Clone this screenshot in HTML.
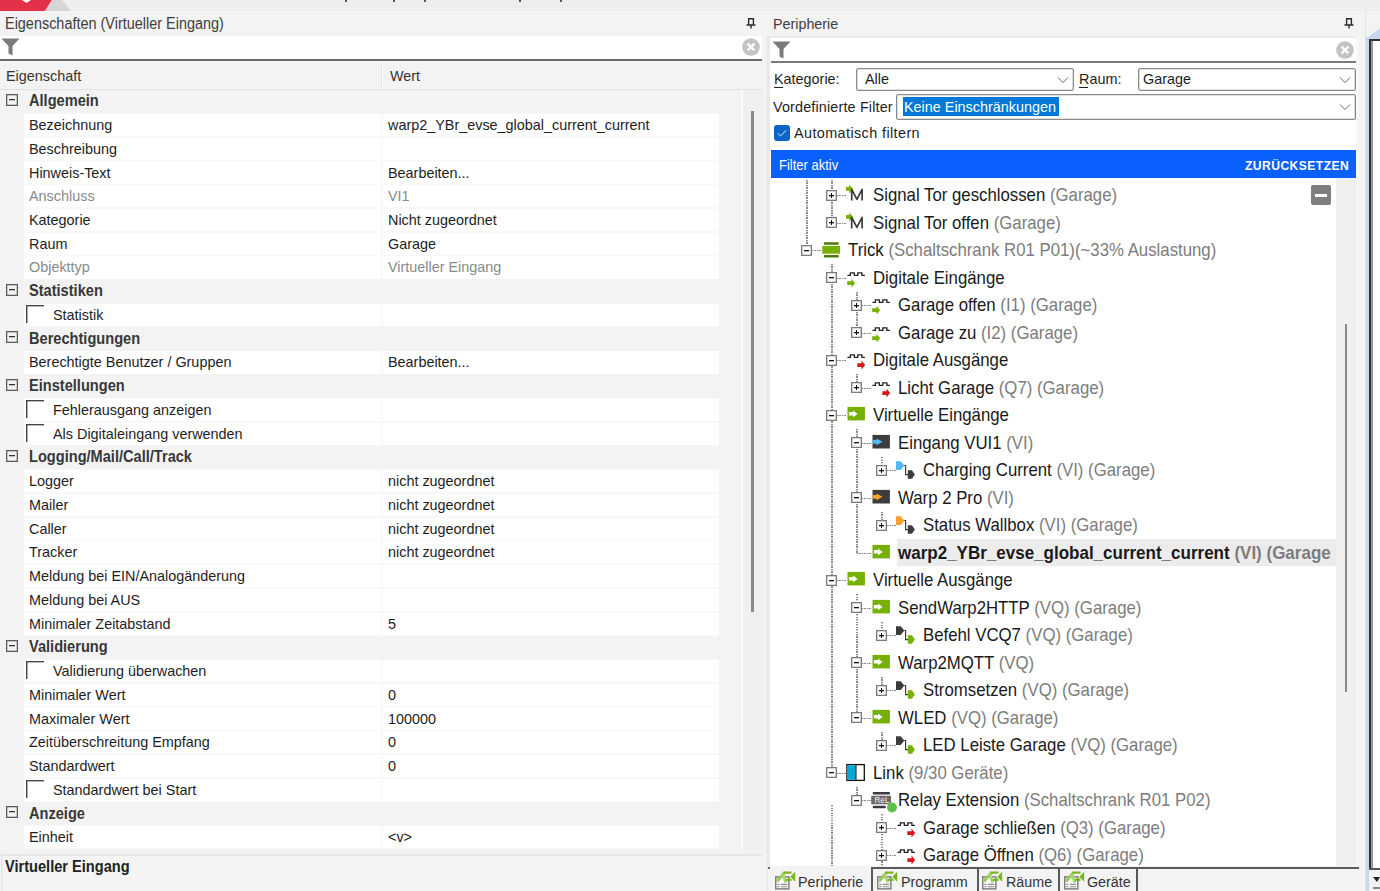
<!DOCTYPE html><html><head><meta charset="utf-8"><style>
*{margin:0;padding:0;box-sizing:border-box}
html,body{width:1380px;height:891px;overflow:hidden;background:#f3f3f3;font-family:"Liberation Sans",sans-serif;color:#1e1e1e}
.a{position:absolute}
.t{position:absolute;white-space:pre;font-size:14.4px;line-height:20px;transform:scaleY(1.08);transform-origin:0 15px}
.t.b{font-size:14.6px}
.g{color:#8a8a8a}
.b{font-weight:bold}
.row{position:absolute;height:23px}
.cb{position:absolute;width:18px;height:18px;border-left:1px solid #444;border-top:1px solid #444;box-shadow:inset 0.6px 0.6px 0 #777}
.ex{position:absolute;width:11px;height:11px;border:1px solid #7c7c7c;box-shadow:inset 0 0 0 0.6px #b0b0b0;background:#fff}
.ex:before{content:"";position:absolute;left:2px;top:4px;width:5px;height:1px;background:#111;box-shadow:0 0.4px 0 #444}
.ex.p:after{content:"";position:absolute;left:4px;top:2px;width:1px;height:5px;background:#111}
.vl{position:absolute;width:1.4px;background:repeating-linear-gradient(to bottom,#8c8c8c 0 1.3px,#d8d8d8 1.3px 1.7px,transparent 1.7px 2.5px)}
.hl{position:absolute;height:1.4px;background:repeating-linear-gradient(to right,#8c8c8c 0 1.3px,#d8d8d8 1.3px 1.7px,transparent 1.7px 2.5px)}
.tt{position:absolute;white-space:pre;font-size:16.8px;line-height:22px;color:#1a1a1a;transform:scaleY(1.08);transform-origin:0 17px}
.tt.b{font-size:17px}
.tt .g{color:#7d7d7d}
</style></head><body>
<div class="a" style="left:0;top:0;width:1380px;height:11px;background:#eeeeee"></div>
<svg class="a" style="left:0;top:0" width="80" height="11"><polygon points="0,0 52,0 45,11 0,11" fill="#e5304a"/><polygon points="52,0 62,0 71,11 45,11" fill="#d6d6d6"/><polygon points="22,0 31,0 26.5,3" fill="#fff"/></svg>
<div class="a" style="left:345px;top:0;width:2px;height:2px;background:#555"></div>
<div class="a" style="left:393px;top:0;width:2px;height:2px;background:#555"></div>
<div class="a" style="left:424px;top:0;width:2px;height:2px;background:#555"></div>
<div class="a" style="left:519px;top:0;width:2px;height:2px;background:#555"></div>
<div class="a" style="left:560px;top:0;width:2px;height:2px;background:#555"></div>
<div class="t" style="left:5px;top:14px;font-size:14.45px;color:#3e3e3e">Eigenschaften (Virtueller Eingang)</div>
<svg class="a" style="left:746px;top:18px" width="10" height="11" viewBox="0 0 10 11"><path d="M2,0.8H8M2.6,0.8V6.5M7.4,0.8V6.5M0.5,7H9.5M5,7V10.5" stroke="#2a2a2a" stroke-width="1.4" fill="none"/></svg>
<div class="a" style="left:0;top:36px;width:762px;height:25px;background:#fff;border-bottom:2px solid #6b6b6b"></div>
<svg class="a" style="left:1px;top:38px" width="19" height="18" viewBox="0 0 19 18"><path d="M0.5,0.5H18.5L11.5,8V17.5L7.5,15.5V8Z" fill="#7a7a7a"/></svg>
<svg class="a" style="left:742px;top:38px" width="18" height="18" viewBox="0 0 18 18"><circle cx="9" cy="9" r="8.8" fill="#c3c3c3"/><path d="M5.6,5.6L12.4,12.4M12.4,5.6L5.6,12.4" stroke="#fff" stroke-width="2.2"/></svg>
<div class="a" style="left:0;top:61px;width:763px;height:29px;background:#f3f3f3;border-bottom:1px solid #e3e3e3"></div>
<div class="a" style="left:381px;top:62px;width:1px;height:27px;background:#e6e6e6"></div>
<div class="a" style="left:382px;top:62px;width:1px;height:27px;background:#fff"></div>
<div class="t" style="left:6px;top:66px;color:#333">Eigenschaft</div>
<div class="t" style="left:390px;top:66px;color:#333">Wert</div>
<div class="a" style="left:6px;top:94px;width:12px;height:12px;border:1px solid #5a5a5a;box-shadow:inset 0 0 0 0.5px #9a9a9a"></div>
<div class="a" style="left:9px;top:99px;width:6px;height:1px;background:#333;box-shadow:0 0.5px 0 #888"></div>
<div class="t b" style="left:29px;top:91.30px;color:#383838">Allgemein</div>
<div class="a" style="left:24px;top:113.24px;width:695px;height:23.74px;background:#f8f8f8"></div>
<div class="a" style="left:24px;top:113.99px;width:357px;height:22.2px;background:#fff"></div>
<div class="a" style="left:383px;top:113.99px;width:336px;height:22.2px;background:#fff"></div>
<div class="t" style="left:29px;top:115.04px">Bezeichnung</div>
<div class="t" style="left:388px;top:115.04px">warp2_YBr_evse_global_current_current</div>
<div class="a" style="left:24px;top:136.98px;width:695px;height:23.74px;background:#f8f8f8"></div>
<div class="a" style="left:24px;top:137.73px;width:357px;height:22.2px;background:#fff"></div>
<div class="a" style="left:383px;top:137.73px;width:336px;height:22.2px;background:#fff"></div>
<div class="t" style="left:29px;top:138.78px">Beschreibung</div>
<div class="a" style="left:24px;top:160.72px;width:695px;height:23.74px;background:#f8f8f8"></div>
<div class="a" style="left:24px;top:161.47px;width:357px;height:22.2px;background:#fff"></div>
<div class="a" style="left:383px;top:161.47px;width:336px;height:22.2px;background:#fff"></div>
<div class="t" style="left:29px;top:162.52px">Hinweis-Text</div>
<div class="t" style="left:388px;top:162.52px">Bearbeiten...</div>
<div class="a" style="left:24px;top:184.46px;width:695px;height:23.74px;background:#f8f8f8"></div>
<div class="a" style="left:24px;top:185.21px;width:357px;height:22.2px;background:#fff"></div>
<div class="a" style="left:383px;top:185.21px;width:336px;height:22.2px;background:#fff"></div>
<div class="t g" style="left:29px;top:186.26px">Anschluss</div>
<div class="t g" style="left:388px;top:186.26px">VI1</div>
<div class="a" style="left:24px;top:208.20px;width:695px;height:23.74px;background:#f8f8f8"></div>
<div class="a" style="left:24px;top:208.95px;width:357px;height:22.2px;background:#fff"></div>
<div class="a" style="left:383px;top:208.95px;width:336px;height:22.2px;background:#fff"></div>
<div class="t" style="left:29px;top:210.00px">Kategorie</div>
<div class="t" style="left:388px;top:210.00px">Nicht zugeordnet</div>
<div class="a" style="left:24px;top:231.94px;width:695px;height:23.74px;background:#f8f8f8"></div>
<div class="a" style="left:24px;top:232.69px;width:357px;height:22.2px;background:#fff"></div>
<div class="a" style="left:383px;top:232.69px;width:336px;height:22.2px;background:#fff"></div>
<div class="t" style="left:29px;top:233.74px">Raum</div>
<div class="t" style="left:388px;top:233.74px">Garage</div>
<div class="a" style="left:24px;top:255.68px;width:695px;height:23.74px;background:#f8f8f8"></div>
<div class="a" style="left:24px;top:256.43px;width:357px;height:22.2px;background:#fff"></div>
<div class="a" style="left:383px;top:256.43px;width:336px;height:22.2px;background:#fff"></div>
<div class="t g" style="left:29px;top:257.48px">Objekttyp</div>
<div class="t g" style="left:388px;top:257.48px">Virtueller Eingang</div>
<div class="a" style="left:6px;top:284px;width:12px;height:12px;border:1px solid #5a5a5a;box-shadow:inset 0 0 0 0.5px #9a9a9a"></div>
<div class="a" style="left:9px;top:289px;width:6px;height:1px;background:#333;box-shadow:0 0.5px 0 #888"></div>
<div class="t b" style="left:29px;top:281.22px;color:#383838">Statistiken</div>
<div class="a" style="left:24px;top:303.16px;width:695px;height:23.74px;background:#f8f8f8"></div>
<div class="a" style="left:24px;top:303.91px;width:357px;height:22.2px;background:#fff"></div>
<div class="a" style="left:383px;top:303.91px;width:336px;height:22.2px;background:#fff"></div>
<div class="cb" style="left:26px;top:305.16px"></div>
<div class="t" style="left:53px;top:304.96px">Statistik</div>
<div class="a" style="left:6px;top:331px;width:12px;height:12px;border:1px solid #5a5a5a;box-shadow:inset 0 0 0 0.5px #9a9a9a"></div>
<div class="a" style="left:9px;top:336px;width:6px;height:1px;background:#333;box-shadow:0 0.5px 0 #888"></div>
<div class="t b" style="left:29px;top:328.70px;color:#383838">Berechtigungen</div>
<div class="a" style="left:24px;top:350.64px;width:695px;height:23.74px;background:#f8f8f8"></div>
<div class="a" style="left:24px;top:351.39px;width:357px;height:22.2px;background:#fff"></div>
<div class="a" style="left:383px;top:351.39px;width:336px;height:22.2px;background:#fff"></div>
<div class="t" style="left:29px;top:352.44px">Berechtigte Benutzer / Gruppen</div>
<div class="t" style="left:388px;top:352.44px">Bearbeiten...</div>
<div class="a" style="left:6px;top:379px;width:12px;height:12px;border:1px solid #5a5a5a;box-shadow:inset 0 0 0 0.5px #9a9a9a"></div>
<div class="a" style="left:9px;top:384px;width:6px;height:1px;background:#333;box-shadow:0 0.5px 0 #888"></div>
<div class="t b" style="left:29px;top:376.18px;color:#383838">Einstellungen</div>
<div class="a" style="left:24px;top:398.12px;width:695px;height:23.74px;background:#f8f8f8"></div>
<div class="a" style="left:24px;top:398.87px;width:357px;height:22.2px;background:#fff"></div>
<div class="a" style="left:383px;top:398.87px;width:336px;height:22.2px;background:#fff"></div>
<div class="cb" style="left:26px;top:400.12px"></div>
<div class="t" style="left:53px;top:399.92px">Fehlerausgang anzeigen</div>
<div class="a" style="left:24px;top:421.86px;width:695px;height:23.74px;background:#f8f8f8"></div>
<div class="a" style="left:24px;top:422.61px;width:357px;height:22.2px;background:#fff"></div>
<div class="a" style="left:383px;top:422.61px;width:336px;height:22.2px;background:#fff"></div>
<div class="cb" style="left:26px;top:423.86px"></div>
<div class="t" style="left:53px;top:423.66px">Als Digitaleingang verwenden</div>
<div class="a" style="left:6px;top:450px;width:12px;height:12px;border:1px solid #5a5a5a;box-shadow:inset 0 0 0 0.5px #9a9a9a"></div>
<div class="a" style="left:9px;top:455px;width:6px;height:1px;background:#333;box-shadow:0 0.5px 0 #888"></div>
<div class="t b" style="left:29px;top:447.40px;color:#383838">Logging/Mail/Call/Track</div>
<div class="a" style="left:24px;top:469.34px;width:695px;height:23.74px;background:#f8f8f8"></div>
<div class="a" style="left:24px;top:470.09px;width:357px;height:22.2px;background:#fff"></div>
<div class="a" style="left:383px;top:470.09px;width:336px;height:22.2px;background:#fff"></div>
<div class="t" style="left:29px;top:471.14px">Logger</div>
<div class="t" style="left:388px;top:471.14px">nicht zugeordnet</div>
<div class="a" style="left:24px;top:493.08px;width:695px;height:23.74px;background:#f8f8f8"></div>
<div class="a" style="left:24px;top:493.83px;width:357px;height:22.2px;background:#fff"></div>
<div class="a" style="left:383px;top:493.83px;width:336px;height:22.2px;background:#fff"></div>
<div class="t" style="left:29px;top:494.88px">Mailer</div>
<div class="t" style="left:388px;top:494.88px">nicht zugeordnet</div>
<div class="a" style="left:24px;top:516.82px;width:695px;height:23.74px;background:#f8f8f8"></div>
<div class="a" style="left:24px;top:517.57px;width:357px;height:22.2px;background:#fff"></div>
<div class="a" style="left:383px;top:517.57px;width:336px;height:22.2px;background:#fff"></div>
<div class="t" style="left:29px;top:518.62px">Caller</div>
<div class="t" style="left:388px;top:518.62px">nicht zugeordnet</div>
<div class="a" style="left:24px;top:540.56px;width:695px;height:23.74px;background:#f8f8f8"></div>
<div class="a" style="left:24px;top:541.31px;width:357px;height:22.2px;background:#fff"></div>
<div class="a" style="left:383px;top:541.31px;width:336px;height:22.2px;background:#fff"></div>
<div class="t" style="left:29px;top:542.36px">Tracker</div>
<div class="t" style="left:388px;top:542.36px">nicht zugeordnet</div>
<div class="a" style="left:24px;top:564.30px;width:695px;height:23.74px;background:#f8f8f8"></div>
<div class="a" style="left:24px;top:565.05px;width:357px;height:22.2px;background:#fff"></div>
<div class="a" style="left:383px;top:565.05px;width:336px;height:22.2px;background:#fff"></div>
<div class="t" style="left:29px;top:566.10px">Meldung bei EIN/Analogänderung</div>
<div class="a" style="left:24px;top:588.04px;width:695px;height:23.74px;background:#f8f8f8"></div>
<div class="a" style="left:24px;top:588.79px;width:357px;height:22.2px;background:#fff"></div>
<div class="a" style="left:383px;top:588.79px;width:336px;height:22.2px;background:#fff"></div>
<div class="t" style="left:29px;top:589.84px">Meldung bei AUS</div>
<div class="a" style="left:24px;top:611.78px;width:695px;height:23.74px;background:#f8f8f8"></div>
<div class="a" style="left:24px;top:612.53px;width:357px;height:22.2px;background:#fff"></div>
<div class="a" style="left:383px;top:612.53px;width:336px;height:22.2px;background:#fff"></div>
<div class="t" style="left:29px;top:613.58px">Minimaler Zeitabstand</div>
<div class="t" style="left:388px;top:613.58px">5</div>
<div class="a" style="left:6px;top:640px;width:12px;height:12px;border:1px solid #5a5a5a;box-shadow:inset 0 0 0 0.5px #9a9a9a"></div>
<div class="a" style="left:9px;top:645px;width:6px;height:1px;background:#333;box-shadow:0 0.5px 0 #888"></div>
<div class="t b" style="left:29px;top:637.32px;color:#383838">Validierung</div>
<div class="a" style="left:24px;top:659.26px;width:695px;height:23.74px;background:#f8f8f8"></div>
<div class="a" style="left:24px;top:660.01px;width:357px;height:22.2px;background:#fff"></div>
<div class="a" style="left:383px;top:660.01px;width:336px;height:22.2px;background:#fff"></div>
<div class="cb" style="left:26px;top:661.26px"></div>
<div class="t" style="left:53px;top:661.06px">Validierung überwachen</div>
<div class="a" style="left:24px;top:683.00px;width:695px;height:23.74px;background:#f8f8f8"></div>
<div class="a" style="left:24px;top:683.75px;width:357px;height:22.2px;background:#fff"></div>
<div class="a" style="left:383px;top:683.75px;width:336px;height:22.2px;background:#fff"></div>
<div class="t" style="left:29px;top:684.80px">Minimaler Wert</div>
<div class="t" style="left:388px;top:684.80px">0</div>
<div class="a" style="left:24px;top:706.74px;width:695px;height:23.74px;background:#f8f8f8"></div>
<div class="a" style="left:24px;top:707.49px;width:357px;height:22.2px;background:#fff"></div>
<div class="a" style="left:383px;top:707.49px;width:336px;height:22.2px;background:#fff"></div>
<div class="t" style="left:29px;top:708.54px">Maximaler Wert</div>
<div class="t" style="left:388px;top:708.54px">100000</div>
<div class="a" style="left:24px;top:730.48px;width:695px;height:23.74px;background:#f8f8f8"></div>
<div class="a" style="left:24px;top:731.23px;width:357px;height:22.2px;background:#fff"></div>
<div class="a" style="left:383px;top:731.23px;width:336px;height:22.2px;background:#fff"></div>
<div class="t" style="left:29px;top:732.28px">Zeitüberschreitung Empfang</div>
<div class="t" style="left:388px;top:732.28px">0</div>
<div class="a" style="left:24px;top:754.22px;width:695px;height:23.74px;background:#f8f8f8"></div>
<div class="a" style="left:24px;top:754.97px;width:357px;height:22.2px;background:#fff"></div>
<div class="a" style="left:383px;top:754.97px;width:336px;height:22.2px;background:#fff"></div>
<div class="t" style="left:29px;top:756.02px">Standardwert</div>
<div class="t" style="left:388px;top:756.02px">0</div>
<div class="a" style="left:24px;top:777.96px;width:695px;height:23.74px;background:#f8f8f8"></div>
<div class="a" style="left:24px;top:778.71px;width:357px;height:22.2px;background:#fff"></div>
<div class="a" style="left:383px;top:778.71px;width:336px;height:22.2px;background:#fff"></div>
<div class="cb" style="left:26px;top:779.96px"></div>
<div class="t" style="left:53px;top:779.76px">Standardwert bei Start</div>
<div class="a" style="left:6px;top:806px;width:12px;height:12px;border:1px solid #5a5a5a;box-shadow:inset 0 0 0 0.5px #9a9a9a"></div>
<div class="a" style="left:9px;top:811px;width:6px;height:1px;background:#333;box-shadow:0 0.5px 0 #888"></div>
<div class="t b" style="left:29px;top:803.50px;color:#383838">Anzeige</div>
<div class="a" style="left:24px;top:825.44px;width:695px;height:23.74px;background:#f8f8f8"></div>
<div class="a" style="left:24px;top:826.19px;width:357px;height:22.2px;background:#fff"></div>
<div class="a" style="left:383px;top:826.19px;width:336px;height:22.2px;background:#fff"></div>
<div class="t" style="left:29px;top:827.24px">Einheit</div>
<div class="t" style="left:388px;top:827.24px">&lt;v&gt;</div>
<div class="a" style="left:741px;top:90px;width:2px;height:760px;background:#fafafa"></div>
<div class="a" style="left:743px;top:90px;width:19px;height:760px;background:#efefef"></div>
<div class="a" style="left:751px;top:111px;width:3px;height:501px;background:#8a8a8a"></div>
<div class="a" style="left:0;top:849px;width:763px;height:42px;background:#f3f3f3"></div>
<div class="a" style="left:1px;top:854px;width:761px;height:37px;background:#f4f4f4;border-top:2px solid #e6e6e6;border-left:2px solid #e9e9e9"></div>
<div class="t b" style="left:5px;top:857px;color:#222">Virtueller Eingang</div>
<div class="a" style="left:763px;top:11px;width:5px;height:880px;background:#f3f3f3"></div>
<div class="a" style="left:767px;top:36px;width:1px;height:855px;background:#e6e6e6"></div>
<div class="t" style="left:773px;top:14px;font-size:14.3px;color:#3e3e3e">Peripherie</div>
<svg class="a" style="left:1344px;top:18px" width="10" height="11" viewBox="0 0 10 11"><path d="M2,0.8H8M2.6,0.8V6.5M7.4,0.8V6.5M0.5,7H9.5M5,7V10.5" stroke="#2a2a2a" stroke-width="1.4" fill="none"/></svg>
<div class="a" style="left:768px;top:36px;width:588px;height:142px;background:#fff;border-left:2px solid #e8e8e8;border-top:2px solid #ececec"></div>
<div class="a" style="left:771px;top:61px;width:585px;height:2px;background:#7a7a7a"></div>
<svg class="a" style="left:772px;top:41px" width="19" height="18" viewBox="0 0 19 18"><path d="M0.5,0.5H18.5L11.5,8V17.5L7.5,15.5V8Z" fill="#7a7a7a"/></svg>
<svg class="a" style="left:1336px;top:41px" width="18" height="18" viewBox="0 0 18 18"><circle cx="9" cy="9" r="8.8" fill="#c3c3c3"/><path d="M5.6,5.6L12.4,12.4M12.4,5.6L5.6,12.4" stroke="#fff" stroke-width="2.2"/></svg>
<div class="t" style="left:774px;top:69px">Kategorie:</div>
<div class="a" style="left:774px;top:87px;width:9px;height:1px;background:#222"></div>
<div class="a" style="left:856px;top:68px;width:218px;height:23px;background:#fff;border:1px solid #8a8a8a;border-radius:2px;box-shadow:inset 0 0 0 0.6px #c4c4c4"></div><svg class="a" style="left:1057px;top:75.5px" width="12" height="8" viewBox="0 0 12 8"><path d="M1,1.5L6,6.5L11,1.5" stroke="#666" stroke-width="1" fill="none"/></svg>
<div class="t" style="left:865px;top:69px">Alle</div>
<div class="t" style="left:1079px;top:69px">Raum:</div>
<div class="a" style="left:1079px;top:87px;width:9px;height:1px;background:#222"></div>
<div class="a" style="left:1138px;top:68px;width:218px;height:23px;background:#fff;border:1px solid #8a8a8a;border-radius:2px;box-shadow:inset 0 0 0 0.6px #c4c4c4"></div><svg class="a" style="left:1339px;top:75.5px" width="12" height="8" viewBox="0 0 12 8"><path d="M1,1.5L6,6.5L11,1.5" stroke="#666" stroke-width="1" fill="none"/></svg>
<div class="t" style="left:1143px;top:69px">Garage</div>
<div class="t" style="left:773px;top:97px;letter-spacing:0.15px">Vordefinierte Filter</div>
<div class="a" style="left:896px;top:94px;width:460px;height:26px;background:#fff;border:1px solid #8a8a8a;border-radius:2px;box-shadow:inset 0 0 0 0.6px #c4c4c4"></div><svg class="a" style="left:1339px;top:103.0px" width="12" height="8" viewBox="0 0 12 8"><path d="M1,1.5L6,6.5L11,1.5" stroke="#666" stroke-width="1" fill="none"/></svg>
<div class="a" style="left:903px;top:97px;width:156px;height:19px;background:#0078d7"></div>
<div class="t" style="left:904px;top:97px;color:#fff">Keine Einschränkungen</div>
<div class="a" style="left:774px;top:125px;width:16px;height:16px;background:#0a64c8;border-radius:3px"></div>
<svg class="a" style="left:774px;top:125px" width="16" height="16" viewBox="0 0 16 16"><path d="M3.8,8.4L6.6,11L12.2,5.2" stroke="#dfe9f7" stroke-width="1" fill="none"/></svg>
<div class="t" style="left:794px;top:123px;letter-spacing:0.4px">Automatisch filtern</div>
<div class="a" style="left:771px;top:150px;width:585px;height:29px;background:#0960fd"></div>
<div class="t" style="left:779px;top:156px;font-size:13px;color:#fff">Filter aktiv</div>
<div class="t b" style="left:1245px;top:156px;font-size:12.1px;color:#fff;letter-spacing:0.45px">ZURÜCKSETZEN</div>
<div class="a" style="left:770px;top:178px;width:566px;height:688px;background:#fff"></div>
<div class="a" style="left:768px;top:36px;width:2px;height:830px;background:#e9e9e9"></div>
<div class="a" style="left:1336px;top:178px;width:20px;height:688px;background:#f0f0f0"></div>
<div class="a" style="left:1345px;top:324px;width:2px;height:368px;background:#8a8a8a"></div>
<div class="a" style="left:1311px;top:185px;width:20px;height:20px;background:#7f7f7f;border-radius:2px"></div>
<div class="a" style="left:1315px;top:193.5px;width:12px;height:3px;background:#fff"></div>
<div class="vl" style="left:806.2px;top:180.0px;height:70.3px"></div>
<div class="vl" style="left:831.2px;top:180.0px;height:42.8px"></div>
<div class="vl" style="left:831.2px;top:264.1px;height:508.7px"></div>
<div class="vl" style="left:831.2px;top:805.0px;height:61.0px"></div>
<div class="vl" style="left:856.2px;top:291.6px;height:41.2px"></div>
<div class="vl" style="left:856.2px;top:374.1px;height:13.8px"></div>
<div class="vl" style="left:856.2px;top:429.1px;height:123.7px"></div>
<div class="vl" style="left:856.2px;top:594.0px;height:123.8px"></div>
<div class="vl" style="left:856.2px;top:786.5px;height:13.8px"></div>
<div class="vl" style="left:881.2px;top:456.6px;height:13.8px"></div>
<div class="vl" style="left:881.2px;top:511.5px;height:13.8px"></div>
<div class="vl" style="left:881.2px;top:621.5px;height:13.8px"></div>
<div class="vl" style="left:881.2px;top:676.5px;height:13.8px"></div>
<div class="vl" style="left:881.2px;top:731.5px;height:13.8px"></div>
<div class="vl" style="left:881.2px;top:814.0px;height:52.0px"></div>
<div class="hl" style="left:832px;top:194.8px;width:14px"></div>
<div class="ex p" style="left:826px;top:190px"></div>
<svg class="a" style="left:847px;top:185.3px;overflow:visible" width="20" height="20"><path d="M-1,2H2.3V-0.4L6.1,4.1L2.3,8.5V5.8H-1Z" fill="#76b000"/><path d="M4.7,15.4V4.4L9.9,14.4L15.1,4.4V15.4" stroke="#3c3c3c" stroke-width="1.7" fill="none" stroke-linejoin="round"/></svg>
<div class="tt" style="left:873px;top:185.3px">Signal Tor geschlossen<span class="g"> (Garage)</span></div>
<div class="hl" style="left:832px;top:222.8px;width:14px"></div>
<div class="ex p" style="left:826px;top:217px"></div>
<svg class="a" style="left:847px;top:212.8px;overflow:visible" width="20" height="20"><path d="M-1,2H2.3V-0.4L6.1,4.1L2.3,8.5V5.8H-1Z" fill="#76b000"/><path d="M4.7,15.4V4.4L9.9,14.4L15.1,4.4V15.4" stroke="#3c3c3c" stroke-width="1.7" fill="none" stroke-linejoin="round"/></svg>
<div class="tt" style="left:873px;top:212.8px">Signal Tor offen<span class="g"> (Garage)</span></div>
<div class="hl" style="left:807px;top:249.8px;width:14px"></div>
<div class="ex" style="left:801px;top:245px"></div>
<svg class="a" style="left:822px;top:240.3px;overflow:visible" width="20" height="20"><rect x="1.8" y="2.2" width="15" height="2.6" rx="1" fill="#4d7a00"/><rect x="0.3" y="5.9" width="17.7" height="7.8" fill="#76b000"/><rect x="1.8" y="14.9" width="15" height="2.6" rx="1" fill="#4d7a00"/></svg>
<div class="tt" style="left:848px;top:240.3px">Trick<span class="g"> (Schaltschrank R01 P01)(~33% Auslastung)</span></div>
<div class="hl" style="left:832px;top:277.8px;width:14px"></div>
<div class="ex" style="left:826px;top:272px"></div>
<svg class="a" style="left:847px;top:267.8px;overflow:visible" width="20" height="20"><path d="M0.4,7.4H3.4V4.9H7.3V7.4H10.8V4.9H14.9V7.4H17.9" stroke="#222" stroke-width="1.3" fill="none"/><path d="M0.2,13.2H4.5V10.8L8.1,15.2L4.5,19.6V16.9H0.2Z" fill="#76b000"/></svg>
<div class="tt" style="left:873px;top:267.8px">Digitale Eingänge<span class="g"></span></div>
<div class="hl" style="left:857px;top:304.8px;width:14px"></div>
<div class="ex p" style="left:851px;top:300px"></div>
<svg class="a" style="left:872px;top:295.3px;overflow:visible" width="20" height="20"><path d="M0.4,7.4H3.4V4.9H7.3V7.4H10.8V4.9H14.9V7.4H17.9" stroke="#222" stroke-width="1.3" fill="none"/><path d="M0.2,13.2H4.5V10.8L8.1,15.2L4.5,19.6V16.9H0.2Z" fill="#76b000"/></svg>
<div class="tt" style="left:898px;top:295.3px">Garage offen<span class="g"> (I1) (Garage)</span></div>
<div class="hl" style="left:857px;top:332.8px;width:14px"></div>
<div class="ex p" style="left:851px;top:327px"></div>
<svg class="a" style="left:872px;top:322.8px;overflow:visible" width="20" height="20"><path d="M0.4,7.4H3.4V4.9H7.3V7.4H10.8V4.9H14.9V7.4H17.9" stroke="#222" stroke-width="1.3" fill="none"/><path d="M0.2,13.2H4.5V10.8L8.1,15.2L4.5,19.6V16.9H0.2Z" fill="#76b000"/></svg>
<div class="tt" style="left:898px;top:322.8px">Garage zu<span class="g"> (I2) (Garage)</span></div>
<div class="hl" style="left:832px;top:359.8px;width:14px"></div>
<div class="ex" style="left:826px;top:355px"></div>
<svg class="a" style="left:847px;top:350.3px;overflow:visible" width="20" height="20"><path d="M0.4,7.4H3.4V4.9H7.3V7.4H10.8V4.9H14.9V7.4H17.9" stroke="#222" stroke-width="1.3" fill="none"/><path d="M10.3,13.2H14.5V10.6L18.2,15.1L14.5,19.6V17H10.3Z" fill="#d8191b"/></svg>
<div class="tt" style="left:873px;top:350.3px">Digitale Ausgänge<span class="g"></span></div>
<div class="hl" style="left:857px;top:387.8px;width:14px"></div>
<div class="ex p" style="left:851px;top:382px"></div>
<svg class="a" style="left:872px;top:377.8px;overflow:visible" width="20" height="20"><path d="M0.4,7.4H3.4V4.9H7.3V7.4H10.8V4.9H14.9V7.4H17.9" stroke="#222" stroke-width="1.3" fill="none"/><path d="M10.3,13.2H14.5V10.6L18.2,15.1L14.5,19.6V17H10.3Z" fill="#d8191b"/></svg>
<div class="tt" style="left:898px;top:377.8px">Licht Garage<span class="g"> (Q7) (Garage)</span></div>
<div class="hl" style="left:832px;top:414.8px;width:14px"></div>
<div class="ex" style="left:826px;top:410px"></div>
<svg class="a" style="left:847px;top:405.3px;overflow:visible" width="20" height="20"><rect x="0.5" y="1.9" width="17.4" height="13.5" fill="#76b000"/><path d="M1.9,7.1H6.1V5.6L10.6,8.9L6.1,12.2V10.6H1.9Z" fill="#fff"/></svg>
<div class="tt" style="left:873px;top:405.3px">Virtuelle Eingänge<span class="g"></span></div>
<div class="hl" style="left:857px;top:442.8px;width:14px"></div>
<div class="ex" style="left:851px;top:437px"></div>
<svg class="a" style="left:872px;top:432.8px;overflow:visible" width="20" height="20"><rect x="0.5" y="1.9" width="17.4" height="13.6" fill="#3c3c3c"/><path d="M0.5,7.1H4.6V5.4L10.5,8.8L4.6,12.2V10.8H0.5Z" fill="#52b9f6"/></svg>
<div class="tt" style="left:898px;top:432.8px">Eingang VUI1<span class="g"> (VI)</span></div>
<div class="hl" style="left:882px;top:469.8px;width:14px"></div>
<div class="ex p" style="left:876px;top:465px"></div>
<svg class="a" style="left:897px;top:460.3px;overflow:visible" width="20" height="20"><g transform="translate(0,0.6)"><path d="M-1,0.6H3.7L7.3,4.9L3.7,9.3H-1Z" fill="#52b9f6"/><path d="M7.3,4.9H8.6V14H11" stroke="#333" stroke-width="1.1" fill="none"/><path d="M10.8,9.7H14.9L17.9,14L14.9,18.1H10.8Z" fill="#3c3c3c"/></g></svg>
<div class="tt" style="left:923px;top:460.3px">Charging Current<span class="g"> (VI) (Garage)</span></div>
<div class="hl" style="left:857px;top:497.8px;width:14px"></div>
<div class="ex" style="left:851px;top:492px"></div>
<svg class="a" style="left:872px;top:487.8px;overflow:visible" width="20" height="20"><rect x="0.5" y="1.9" width="17.4" height="13.6" fill="#3c3c3c"/><path d="M0.5,7.1H4.6V5.4L10.5,8.8L4.6,12.2V10.8H0.5Z" fill="#f7a12f"/></svg>
<div class="tt" style="left:898px;top:487.8px">Warp 2 Pro<span class="g"> (VI)</span></div>
<div class="hl" style="left:882px;top:524.8px;width:14px"></div>
<div class="ex p" style="left:876px;top:520px"></div>
<svg class="a" style="left:897px;top:515.3px;overflow:visible" width="20" height="20"><g transform="translate(0,0.6)"><path d="M-1,0.6H3.7L7.3,4.9L3.7,9.3H-1Z" fill="#f7a12f"/><path d="M7.3,4.9H8.6V14H11" stroke="#333" stroke-width="1.1" fill="none"/><path d="M10.8,9.7H14.9L17.9,14L14.9,18.1H10.8Z" fill="#3c3c3c"/></g></svg>
<div class="tt" style="left:923px;top:515.3px">Status Wallbox<span class="g"> (VI) (Garage)</span></div>
<div class="a" style="left:897px;top:539px;width:439px;height:27px;background:#ececec"></div>
<div class="hl" style="left:857px;top:552.8px;width:14px"></div>
<svg class="a" style="left:872px;top:542.8px;overflow:visible" width="20" height="20"><rect x="0.5" y="1.9" width="17.4" height="13.5" fill="#76b000"/><path d="M1.9,7.1H6.1V5.6L10.6,8.9L6.1,12.2V10.6H1.9Z" fill="#fff"/></svg>
<div class="tt b" style="left:898px;top:542.8px">warp2_YBr_evse_global_current_current<span class="g"> (VI) (Garage</span></div>
<div class="hl" style="left:832px;top:579.8px;width:14px"></div>
<div class="ex" style="left:826px;top:575px"></div>
<svg class="a" style="left:847px;top:570.3px;overflow:visible" width="20" height="20"><rect x="0.5" y="1.9" width="17.4" height="13.5" fill="#76b000"/><path d="M1.9,7.1H6.1V5.6L10.6,8.9L6.1,12.2V10.6H1.9Z" fill="#fff"/></svg>
<div class="tt" style="left:873px;top:570.3px">Virtuelle Ausgänge<span class="g"></span></div>
<div class="hl" style="left:857px;top:607.8px;width:14px"></div>
<div class="ex" style="left:851px;top:602px"></div>
<svg class="a" style="left:872px;top:597.8px;overflow:visible" width="20" height="20"><rect x="0.5" y="1.9" width="17.4" height="13.5" fill="#76b000"/><path d="M1.9,7.1H6.1V5.6L10.6,8.9L6.1,12.2V10.6H1.9Z" fill="#fff"/></svg>
<div class="tt" style="left:898px;top:597.8px">SendWarp2HTTP<span class="g"> (VQ) (Garage)</span></div>
<div class="hl" style="left:882px;top:634.8px;width:14px"></div>
<div class="ex p" style="left:876px;top:630px"></div>
<svg class="a" style="left:897px;top:625.3px;overflow:visible" width="20" height="20"><g transform="translate(0,0.6)"><path d="M-1,0.6H3.7L7.3,4.9L3.7,9.3H-1Z" fill="#3c3c3c"/><path d="M7.3,4.9H8.6V14H11" stroke="#333" stroke-width="1.1" fill="none"/><path d="M10.8,9.7H14.9L17.9,14L14.9,18.1H10.8Z" fill="#76b000"/></g></svg>
<div class="tt" style="left:923px;top:625.3px">Befehl VCQ7<span class="g"> (VQ) (Garage)</span></div>
<div class="hl" style="left:857px;top:662.8px;width:14px"></div>
<div class="ex" style="left:851px;top:657px"></div>
<svg class="a" style="left:872px;top:652.8px;overflow:visible" width="20" height="20"><rect x="0.5" y="1.9" width="17.4" height="13.5" fill="#76b000"/><path d="M1.9,7.1H6.1V5.6L10.6,8.9L6.1,12.2V10.6H1.9Z" fill="#fff"/></svg>
<div class="tt" style="left:898px;top:652.8px">Warp2MQTT<span class="g"> (VQ)</span></div>
<div class="hl" style="left:882px;top:689.8px;width:14px"></div>
<div class="ex p" style="left:876px;top:685px"></div>
<svg class="a" style="left:897px;top:680.3px;overflow:visible" width="20" height="20"><g transform="translate(0,0.6)"><path d="M-1,0.6H3.7L7.3,4.9L3.7,9.3H-1Z" fill="#3c3c3c"/><path d="M7.3,4.9H8.6V14H11" stroke="#333" stroke-width="1.1" fill="none"/><path d="M10.8,9.7H14.9L17.9,14L14.9,18.1H10.8Z" fill="#76b000"/></g></svg>
<div class="tt" style="left:923px;top:680.3px">Stromsetzen<span class="g"> (VQ) (Garage)</span></div>
<div class="hl" style="left:857px;top:717.8px;width:14px"></div>
<div class="ex" style="left:851px;top:712px"></div>
<svg class="a" style="left:872px;top:707.8px;overflow:visible" width="20" height="20"><rect x="0.5" y="1.9" width="17.4" height="13.5" fill="#76b000"/><path d="M1.9,7.1H6.1V5.6L10.6,8.9L6.1,12.2V10.6H1.9Z" fill="#fff"/></svg>
<div class="tt" style="left:898px;top:707.8px">WLED<span class="g"> (VQ) (Garage)</span></div>
<div class="hl" style="left:882px;top:744.8px;width:14px"></div>
<div class="ex p" style="left:876px;top:740px"></div>
<svg class="a" style="left:897px;top:735.3px;overflow:visible" width="20" height="20"><g transform="translate(0,0.6)"><path d="M-1,0.6H3.7L7.3,4.9L3.7,9.3H-1Z" fill="#3c3c3c"/><path d="M7.3,4.9H8.6V14H11" stroke="#333" stroke-width="1.1" fill="none"/><path d="M10.8,9.7H14.9L17.9,14L14.9,18.1H10.8Z" fill="#76b000"/></g></svg>
<div class="tt" style="left:923px;top:735.3px">LED Leiste Garage<span class="g"> (VQ) (Garage)</span></div>
<div class="hl" style="left:832px;top:772.8px;width:14px"></div>
<div class="ex" style="left:826px;top:767px"></div>
<svg class="a" style="left:847px;top:762.8px;overflow:visible" width="20" height="20"><rect x="-0.1" y="1.6" width="17.4" height="15.8" fill="#fff" stroke="#111" stroke-width="1.3"/><rect x="0.6" y="2.3" width="8" height="14.4" fill="#00a9d9"/><rect x="8.4" y="1.6" width="1.1" height="15.8" fill="#111"/></svg>
<div class="tt" style="left:873px;top:762.8px">Link<span class="g"> (9/30 Geräte)</span></div>
<div class="hl" style="left:857px;top:799.8px;width:14px"></div>
<div class="ex" style="left:851px;top:795px"></div>
<svg class="a" style="left:872px;top:790.3px;overflow:visible" width="20" height="20"><rect x="0.7" y="1.9" width="17.3" height="2.5" rx="1" fill="#3a3a3a"/><path d="M-0.8,5.7H19V12.5L17.2,14.3H-0.8Z" fill="#6a6a6a"/><text x="2.6" y="13" font-family="Liberation Sans" font-size="8.6" fill="#f4f4f4" transform="scale(0.95,1)">ReL</text><rect x="0.7" y="15.8" width="13.1" height="2.5" rx="1" fill="#3a3a3a"/><circle cx="20" cy="17.5" r="4.9" fill="#5fc04d"/></svg>
<div class="tt" style="left:898px;top:790.3px">Relay Extension<span class="g"> (Schaltschrank R01 P02)</span></div>
<div class="hl" style="left:882px;top:827.8px;width:14px"></div>
<div class="ex p" style="left:876px;top:822px"></div>
<svg class="a" style="left:897px;top:817.8px;overflow:visible" width="20" height="20"><path d="M0.4,7.4H3.4V4.9H7.3V7.4H10.8V4.9H14.9V7.4H17.9" stroke="#222" stroke-width="1.3" fill="none"/><path d="M10.3,13.2H14.5V10.6L18.2,15.1L14.5,19.6V17H10.3Z" fill="#d8191b"/></svg>
<div class="tt" style="left:923px;top:817.8px">Garage schließen<span class="g"> (Q3) (Garage)</span></div>
<div class="hl" style="left:882px;top:854.8px;width:14px"></div>
<div class="ex p" style="left:876px;top:850px"></div>
<svg class="a" style="left:897px;top:845.3px;overflow:visible" width="20" height="20"><path d="M0.4,7.4H3.4V4.9H7.3V7.4H10.8V4.9H14.9V7.4H17.9" stroke="#222" stroke-width="1.3" fill="none"/><path d="M10.3,13.2H14.5V10.6L18.2,15.1L14.5,19.6V17H10.3Z" fill="#d8191b"/></svg>
<div class="tt" style="left:923px;top:845.3px">Garage Öffnen<span class="g"> (Q6) (Garage)</span></div>
<div class="a" style="left:769px;top:866px;width:590px;height:25px;background:#f3f3f3"></div>
<div class="a" style="left:871px;top:867px;width:488px;height:2px;background:#5a5a5a"></div>
<div class="a" style="left:871px;top:867px;width:2px;height:24px;background:#5a5a5a"></div>
<div class="a" style="left:977px;top:867px;width:2px;height:24px;background:#5a5a5a"></div>
<div class="a" style="left:1058px;top:867px;width:2px;height:24px;background:#5a5a5a"></div>
<div class="a" style="left:1136px;top:867px;width:2px;height:24px;background:#5a5a5a"></div>
<div class="a" style="left:768px;top:867px;width:2px;height:2px;background:#666"></div>
<svg class="a" style="left:773px;top:866px;overflow:visible" width="24" height="24"><rect x="2.75" y="10.85" width="13.1" height="12" fill="#fafafa" stroke="#808080" stroke-width="1.5"/><path d="M4.3,18.4H6.5M8,18.4H14.2M4.3,20.7H6.5M8,20.7H14.2" stroke="#8a8a8a" stroke-width="1.1"/><path d="M4.8,14.2L11,7.2" stroke="#96ca55" stroke-width="3.2" fill="none" stroke-linecap="round"/><path d="M9.5,8L13,16.3" stroke="#a9d672" stroke-width="3" fill="none"/><path d="M10.5,6.6H18.5" stroke="#7ab51d" stroke-width="2.2" fill="none"/><path d="M13,13.8H18.5" stroke="#7ab51d" stroke-width="2.2" fill="none"/><path d="M22.2,5.8V15.8L17.3,10.8Z" fill="#7ab51d"/></svg>
<div class="t" style="left:798px;top:872px;font-size:14.3px;color:#333">Peripherie</div>
<svg class="a" style="left:875px;top:866px;overflow:visible" width="24" height="24"><rect x="2.75" y="10.85" width="13.1" height="12" fill="#fafafa" stroke="#808080" stroke-width="1.5"/><path d="M4.3,18.4H6.5M8,18.4H14.2M4.3,20.7H6.5M8,20.7H14.2" stroke="#8a8a8a" stroke-width="1.1"/><path d="M4.8,14.2L11,7.2" stroke="#96ca55" stroke-width="3.2" fill="none" stroke-linecap="round"/><path d="M9.5,8L13,16.3" stroke="#a9d672" stroke-width="3" fill="none"/><path d="M10.5,6.6H18.5" stroke="#7ab51d" stroke-width="2.2" fill="none"/><path d="M13,13.8H18.5" stroke="#7ab51d" stroke-width="2.2" fill="none"/><path d="M22.2,5.8V15.8L17.3,10.8Z" fill="#7ab51d"/></svg>
<div class="t" style="left:901px;top:872px;font-size:14.3px;color:#333">Programm</div>
<svg class="a" style="left:980px;top:866px;overflow:visible" width="24" height="24"><rect x="2.75" y="10.85" width="13.1" height="12" fill="#fafafa" stroke="#808080" stroke-width="1.5"/><path d="M4.3,18.4H6.5M8,18.4H14.2M4.3,20.7H6.5M8,20.7H14.2" stroke="#8a8a8a" stroke-width="1.1"/><path d="M4.8,14.2L11,7.2" stroke="#96ca55" stroke-width="3.2" fill="none" stroke-linecap="round"/><path d="M9.5,8L13,16.3" stroke="#a9d672" stroke-width="3" fill="none"/><path d="M10.5,6.6H18.5" stroke="#7ab51d" stroke-width="2.2" fill="none"/><path d="M13,13.8H18.5" stroke="#7ab51d" stroke-width="2.2" fill="none"/><path d="M22.2,5.8V15.8L17.3,10.8Z" fill="#7ab51d"/></svg>
<div class="t" style="left:1006px;top:872px;font-size:14.3px;color:#333">Räume</div>
<svg class="a" style="left:1062px;top:866px;overflow:visible" width="24" height="24"><rect x="2.75" y="10.85" width="13.1" height="12" fill="#fafafa" stroke="#808080" stroke-width="1.5"/><path d="M4.3,18.4H6.5M8,18.4H14.2M4.3,20.7H6.5M8,20.7H14.2" stroke="#8a8a8a" stroke-width="1.1"/><path d="M4.8,14.2L11,7.2" stroke="#96ca55" stroke-width="3.2" fill="none" stroke-linecap="round"/><path d="M9.5,8L13,16.3" stroke="#a9d672" stroke-width="3" fill="none"/><path d="M10.5,6.6H18.5" stroke="#7ab51d" stroke-width="2.2" fill="none"/><path d="M13,13.8H18.5" stroke="#7ab51d" stroke-width="2.2" fill="none"/><path d="M22.2,5.8V15.8L17.3,10.8Z" fill="#7ab51d"/></svg>
<div class="t" style="left:1087px;top:872px;font-size:14.3px;color:#333">Geräte</div>
<div class="a" style="left:1356px;top:36px;width:3px;height:830px;background:#f7f7f7"></div>
<div class="a" style="left:1365px;top:11px;width:1px;height:880px;background:#e4e4e4"></div>
<div class="a" style="left:1366px;top:37px;width:3px;height:854px;background:#c6d5f0"></div>
<svg class="a" style="left:1359px;top:28px" width="21" height="12"><polygon points="7,11 21,0 21,11" fill="#c6d5f0"/></svg>
<div class="a" style="left:1369px;top:39px;width:11px;height:829px;background:#fff;border-left:2px solid #333;border-top:2px solid #333"></div>
<div class="a" style="left:1371px;top:41px;width:2px;height:827px;background:#999"></div>
<div class="a" style="left:1369px;top:868px;width:11px;height:23px;background:#f3f3f3;border-top:2px solid #555"></div>
<svg class="a" style="left:1373px;top:877px" width="7" height="6"><polygon points="0,0 7,0 4,5" fill="#222"/></svg>
<div class="a" style="left:1373px;top:887px;width:7px;height:1.5px;background:#888"></div>
</body></html>
